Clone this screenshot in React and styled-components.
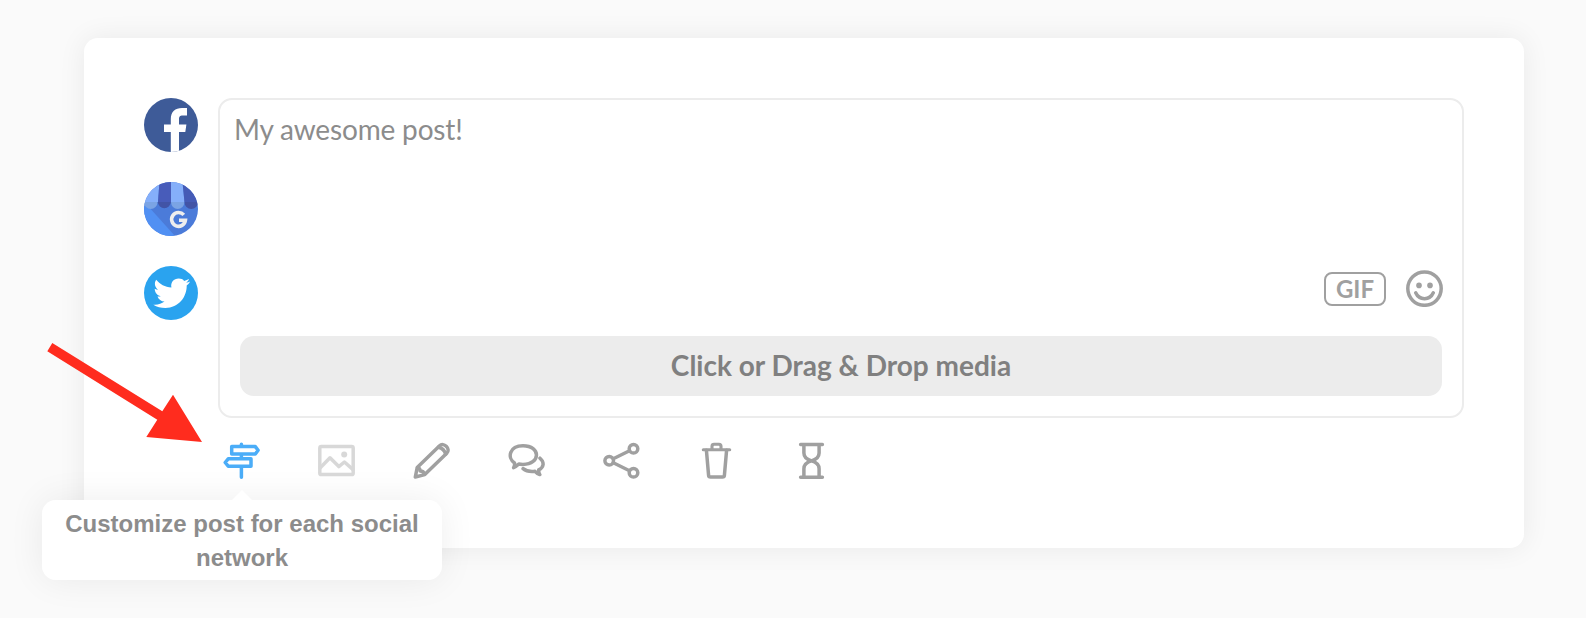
import React, { useState } from "react"
import styled, { createGlobalStyle } from "styled-components"

const GlobalStyle = createGlobalStyle`
  * {
    box-sizing: border-box;
  }
  body {
    margin: 0;
    background: #fafafa;
    font-family: Lato, "Liberation Sans", sans-serif;
  }
`

const Page = styled.main`
  position: relative;
  height: 618px;
  padding: 38px 62px 70px 84px;
  overflow: hidden;
`

const Card = styled.section`
  height: 510px;
  padding: 60px;
  background: #ffffff;
  border-radius: 14px;
  box-shadow: 0 0 28px rgba(0, 0, 0, 0.07);
`

const Composer = styled.div`
  display: flex;
  gap: 20px;
`

const Networks = styled.div`
  display: flex;
  flex-direction: column;
  gap: 30px;
`

const Network = styled.div`
  width: 54px;
  height: 54px;
  border-radius: 50%;
  overflow: hidden;
  color: #ffffff;
  background: ${props => props.color};
`

const Editor = styled.div`
  display: flex;
  flex-direction: column;
  flex: 1;
  height: 320px;
  padding: 12px 20px 20px;
  border: 2px solid #ececec;
  border-radius: 14px;
`

const PostText = styled.p`
  flex: 1;
  margin: 0 0 0 -6px;
  font-size: 28px;
  line-height: 34px;
  letter-spacing: -0.17px;
  color: #8c8c8c;
`

const Extras = styled.div`
  display: flex;
  align-items: center;
  justify-content: flex-end;
  gap: 20px;
  height: 37px;
  margin: 0 -1px 29px 0;
  color: #a0a0a0;
`

const GifButton = styled.button`
  width: 62px;
  height: 34px;
  padding: 0;
  border: 2px solid #a0a0a0;
  border-radius: 8px;
  background: none;
  color: #a0a0a0;
  font: bold 24px/30px Lato, sans-serif;
`

const MediaDrop = styled.div`
  height: 60px;
  border-radius: 14px;
  background: #ececec;
  color: #808080;
  font-size: 28px;
  font-weight: bold;
  line-height: 58px;
  text-align: center;
`

const Toolbar = styled.div`
  display: flex;
  gap: 58px;
  margin: 24px 0 0 79px;
`

const Tool = styled.div`
  position: relative;
  width: 37px;
  height: 38px;
  color: ${props => (props.$active ? "#4badf8" : "#a0a0a0")};
  opacity: ${props => (props.$disabled ? 0.4 : 1)};
  cursor: pointer;
`

const Tooltip = styled.div`
  position: absolute;
  top: 58px;
  left: -181px;
  width: 400px;
  height: 80px;
  padding: 7px 20px 5px;
  border-radius: 14px;
  background: rgba(255, 255, 255, 0.95);
  box-shadow: 0 0 36px rgba(0, 0, 0, 0.07);
  color: #8c8c8c;
  font: bold 24px/34px "Liberation Sans", Arial, sans-serif;
  text-align: center;

  &::before {
    content: "";
    position: absolute;
    top: -10px;
    left: 190px;
    border: 10px solid transparent;
    border-top: 0;
    border-bottom-color: #ffffff;
  }
`

const Pointer = styled.svg`
  position: absolute;
  top: 343px;
  left: 47px;
  fill: #ff2c1e;
`

const Stroked = styled.svg`
  display: block;
  fill: none;
  stroke: currentColor;
  stroke-width: 3.5;
  stroke-linecap: round;
  stroke-linejoin: round;
`

const ToolIcon = ({ children }) => (
  <Stroked width="37" height="38" viewBox="0 0 37 38">
    {children}
  </Stroked>
)

const FacebookLogo = () => (
  <svg width="54" height="54" viewBox="0 0 54 54" fill="currentColor">
    <path d="M26.8 54V34H20v-7.6h6.8V21c0-7.3 4.4-11 11.2-11h5v7.6h-4.2c-3.1 0-3.8 1.4-3.8 3.8v5h7.4L41.3 34H35v20z" />
  </svg>
)

const MyBusinessLogo = () => (
  <svg width="54" height="54" viewBox="0 0 54 54">
    <path fill="#5190f3" d="M0 24h4l27 30H0z" />
    <path fill="#85affa" d="M0 0h15.5L14 20H0z" />
    <path fill="#485cba" d="M15.5 0H27v20H14z" />
    <path fill="#85affa" d="M27 0h11.5l2 20H27z" />
    <path fill="#455bb6" d="M38.5 0H54v20H40.5z" />
    <path fill="#7ba4e4" d="M0 20h13.5a6.7 7 0 0 1-13.5 0z" />
    <path fill="#4254a6" d="M13.7 20H27a6.7 7 0 0 1-13.3 0z" />
    <path fill="#7ba4e4" d="M27 20h13.4a6.7 7 0 0 1-13.4 0z" />
    <path fill="#4254a6" d="M40.5 20H54a6.7 7 0 0 1-13.5 0z" />
    {/* the mark's ring and its crossbar */}
    <path
      fill="none"
      stroke="#eeeeee"
      strokeWidth="3.6"
      d="M39.8 32.9a6.9 6.9 0 1 0 1.6 5.4h-6.4"
    />
  </svg>
)

const TwitterLogo = () => (
  <svg width="54" height="54" viewBox="0 0 54 54" fill="currentColor">
    <path d="M12.2 13.8C15.8 18.3 21 21.1 27.4 21.5c-1-5 2.2-8.9 7.4-8.9 2.2 0 4.1.8 5.4 2.3 1.7-.3 3.4-1 4.8-1.8-.5 1.6-1.6 2.8-2.9 3.7 1.5-.2 2.9-.6 4.1-1.2-.9 1.5-2.1 2.9-3.5 4C42.9 31.1 34.6 42 21.4 42c-4.5 0-8.6-1.2-12.1-3.3 4.3.4 8.2-.7 11.2-3.1-3.3-.2-6-2.3-7-5.2 1.2.2 2.2.2 3.2-.1-3.6-.9-6-3.9-6-7.5 1.1.6 2.2.9 3.4.9-3.4-2.4-4.2-6.6-1.9-9.9z" />
  </svg>
)

const SmileIcon = () => (
  <Stroked width="37" height="37" viewBox="0 0 37 37">
    <circle cx="18.5" cy="18.6" r="16.7" />
    <path d="M9.7 22.8c3.5 7.8 14.1 7.8 17.6 0" />
    <circle cx="13" cy="15.4" r="2.8" fill="currentColor" stroke="none" />
    <circle cx="24" cy="15.4" r="2.8" fill="currentColor" stroke="none" />
  </Stroked>
)

const SignpostIcon = () => (
  <ToolIcon>
    <path d="M18.4 2.3v2M18.4 13v3M18.4 25v10.2" />
    <path d="M8.7 4.6h23.6l2.8 3.7-2.8 3.7H8.7z" />
    <path d="M28 16.8H5.2l-3 3.7 3 3.7H28z" />
  </ToolIcon>
)

const ImageIcon = () => (
  <ToolIcon>
    <rect x="1.8" y="4.6" width="33.4" height="28" rx="1.6" />
    <path d="M2.5 25.5 12 15.8l8.8 8.8 5.6-4.6 8.4 7.4" />
    <circle cx="26.2" cy="12.6" r="3" fill="currentColor" stroke="none" />
  </ToolIcon>
)

const PencilIcon = () => (
  <ToolIcon>
    <path d="M2.3 35 4.2 25.6 26.6 3.8c4-4 11.2 3.1 7.4 7.1L11.8 32.6z" />
    <path d="M4.5 25.8c1.8.2 2.6 1 2.6 3.2 2.4 0 3.8.9 4.2 3M25.5 5.2c3.9.9 6.2 3.3 7.1 7" />
  </ToolIcon>
)

const ChatIcon = () => (
  <ToolIcon>
    <path d="M6.5 21C-1.1 15.6 1.4 3.7 15 3.7c18 0 17.9 18.7 0 18.7-1.6 0-2.9-.1-4.2-.4-1.9 1.8-3.5 3-5.2 3.6 1-1.5 1.2-2.7.9-4.6z" />
    <path d="M32 16.2c4.6 4 4 9.2-1.3 11.7-.1 2 .2 3.3 1.1 4.7-1.8-.6-3.5-1.8-4.8-3.3-4.9.6-8.9-.1-11.9-2.7" />
  </ToolIcon>
)

const ShareIcon = () => (
  <ToolIcon>
    <circle cx="6.2" cy="18.7" r="4.3" />
    <circle cx="30.5" cy="6.8" r="4.3" />
    <circle cx="30.5" cy="30.7" r="4.3" />
    <path d="m10.3 16.7 16.2-8M10.3 20.7l16.2 8" />
  </ToolIcon>
)

const TrashIcon = () => (
  <ToolIcon>
    <path strokeWidth="3.1" d="M5.3 7.8h26.4M14 7V4.2c0-1.3.7-2 2-2h5c1.3 0 2 .7 2 2V7" />
    <path d="m8.4 8.2 2.2 25.2c.1 1.1.8 1.7 1.9 1.7h12c1.1 0 1.8-.6 1.9-1.7l2.2-25.2" />
  </ToolIcon>
)

const HourglassIcon = () => (
  <ToolIcon>
    <path d="M7.6 2.5h21.8M7.6 35.2h21.8" />
    <path d="M10.9 3v8c0 3.8 3.3 6.6 7.6 7.9 4.3-1.3 7.6-4.1 7.6-7.9V3M10.9 35v-8.3c0-3.8 3.3-6.6 7.6-7.8 4.3 1.2 7.6 4 7.6 7.8V35" />
  </ToolIcon>
)

const networks = [
  { name: "Facebook", color: "#3e5b98", icon: <FacebookLogo /> },
  { name: "Google My Business", color: "#4b7bd9", icon: <MyBusinessLogo /> },
  { name: "Twitter", color: "#2aa3ef", icon: <TwitterLogo /> },
]

const tools = [
  { id: "customize", icon: <SignpostIcon />, tip: "Customize post for each social network" },
  { id: "image", icon: <ImageIcon />, disabled: true },
  { id: "edit", icon: <PencilIcon /> },
  { id: "comments", icon: <ChatIcon /> },
  { id: "share", icon: <ShareIcon /> },
  { id: "delete", icon: <TrashIcon /> },
  { id: "schedule", icon: <HourglassIcon /> },
]

const App = () => {
  const [active, setActive] = useState("customize")

  return (
    <Page>
      <GlobalStyle />
      <Card>
        <Composer>
          <Networks>
            {networks.map(network => (
              <Network key={network.name} color={network.color}>
                {network.icon}
              </Network>
            ))}
          </Networks>
          <Editor>
            <PostText>My awesome post!</PostText>
            <Extras>
              <GifButton>GIF</GifButton>
              <SmileIcon />
            </Extras>
            <MediaDrop>Click or Drag &amp; Drop media</MediaDrop>
          </Editor>
        </Composer>
        <Toolbar>
          {tools.map(tool => (
            <Tool
              key={tool.id}
              $active={active === tool.id}
              $disabled={tool.disabled}
              onClick={() => !tool.disabled && setActive(tool.id)}
            >
              {tool.icon}
              {active === tool.id && tool.tip && <Tooltip>{tool.tip}</Tooltip>}
            </Tool>
          ))}
        </Toolbar>
      </Card>
      <Pointer width="156" height="100" viewBox="0 0 156 100">
        <path d="M.3 8.3 5.3 0l110 68.3L126 51.7 155 99 99.3 94l11-17.3z" />
      </Pointer>
    </Page>
  )
}

export default App
